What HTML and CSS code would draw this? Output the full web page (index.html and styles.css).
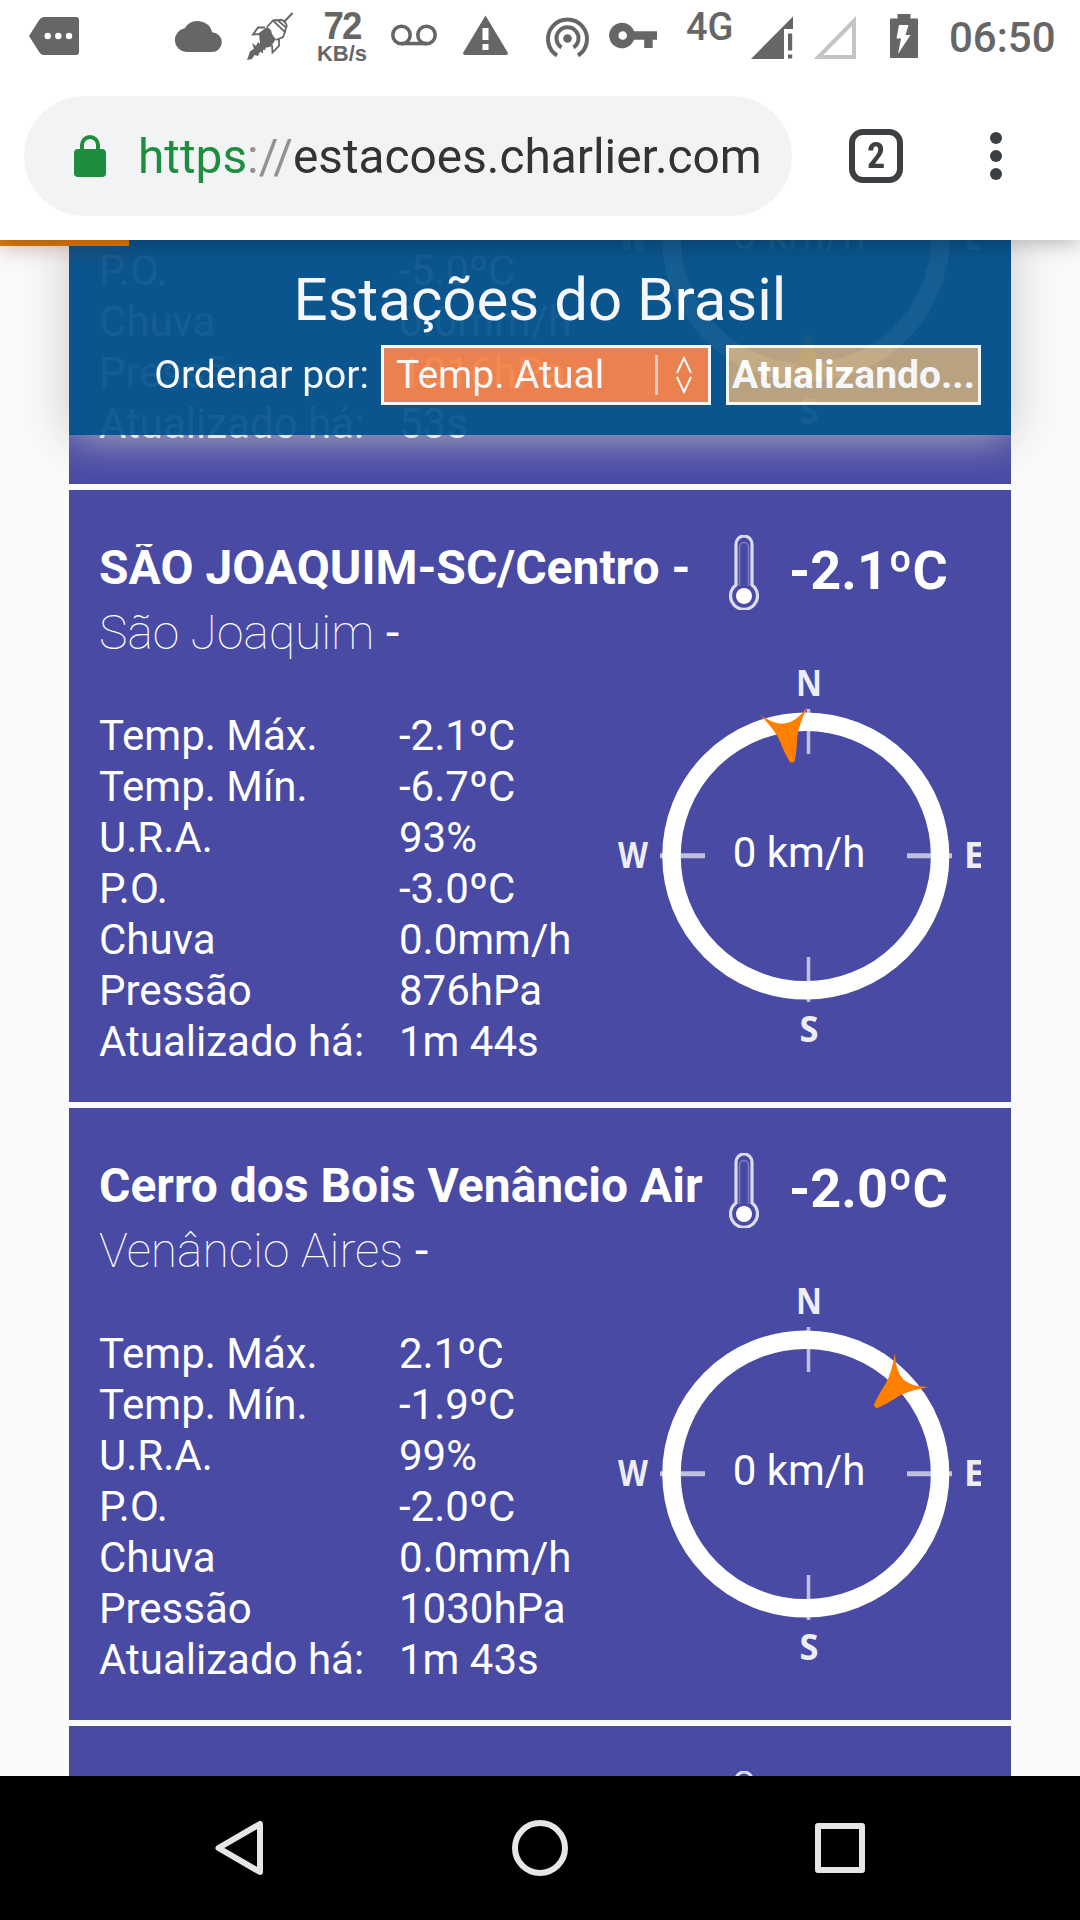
FILE: index.html
```html
<!DOCTYPE html>
<html lang="pt-BR">
<head>
    <meta charset="UTF-8">
    <meta name="viewport" content="width=device-width, initial-scale=1.0">
    <title>Estações do Brasil</title>
    <link rel="stylesheet" href="styles.css">
</head>
<body>

<!-- Desenhos reutilizados nos cartões -->
<svg class="defs" width="0" height="0">
    <symbol id="thermometer" viewBox="0 0 30 75">
        <path d="M7 50V9a8 8 0 0 1 16 0V50A13.500 13.500 0 1 1 7 50Z" fill="none" stroke="#fff" stroke-width="3.200" opacity=".8"/>
        <path d="M10.500 51V12a4.500 4.500 0 0 1 9 0V51" fill="none" stroke="#fff" stroke-width="1.500" opacity=".3"/>
        <circle cx="15" cy="61" r="8" fill="#fff"/>
    </symbol>
    <symbol id="compass" viewBox="0 0 363 372">
        <circle cx="187.800" cy="186" r="134.300" fill="none" stroke="#fff" stroke-width="18.500"/>
        <g stroke="#fff" opacity=".65">
            <path d="M190.500 39V84M190.500 287V332" stroke-width="3.500"/>
            <path d="M42 185.700H87M289 185.700H334" stroke-width="5"/>
        </g>
        <g class="points">
            <text x="191" y="26" textLength="26" lengthAdjust="spacingAndGlyphs">N</text>
            <text x="191" y="371.500" textLength="19" lengthAdjust="spacingAndGlyphs">S</text>
            <text x="15" y="197.500" textLength="30" lengthAdjust="spacingAndGlyphs">W</text>
            <text x="356" y="197.500" textLength="20" lengthAdjust="spacingAndGlyphs">E</text>
        </g>
    </symbol>
    <symbol id="arrow" viewBox="0 0 363 372">
        <path d="M166 39Q180 52 190 51.500Q200 52 214 39Q202 56 199 67Q196 82 192 91H188Q184 82 181 67Q178 56 166 39Z" fill="#ff8000"/>
    </symbol>
</svg>

<!-- Barra de status -->
<div class="status-bar">
    <div class="notifications">
        <svg width="72" height="72" viewBox="18 0 72 72"><path d="M29 36L39.500 19.500Q41 17 44 17H76Q79 17 79 20V52Q79 55 76 55H44Q41 55 39.500 52.500Z"/><g fill="#fff"><circle cx="47.700" cy="36" r="3.200"/><circle cx="58.300" cy="36" r="3.200"/><circle cx="69" cy="36" r="3.200"/></g></svg>
        <span></span>
        <svg width="72" height="72" viewBox="162 0 72 72"><path d="M186.500 52A12 12 0 0 1 184.700 28.200A15.300 15.300 0 0 1 212.300 32.200A9.900 9.900 0 0 1 211.500 52Z"/></svg>
        <svg width="72" height="72" viewBox="234 0 72 72">
            <path d="M292.500 13L284 22" stroke="#666" stroke-width="2"/>
            <path d="M267 27L273 20.500L285 32L283 37L276 40M273 20.500L277.500 20L286 27.500L285 32M278 20.500Q282 18.500 284.500 22Q288 25 286 28M265 27.500L258 27.500L253 34.500L261 34M279 39.500V46L272.500 52.500L272 45" fill="none" stroke="#666" stroke-width="1.800"/>
            <path d="M259 33L267 27L271 30Q272 36 276 39L271 46.500L265 48L266.500 49.500L263 50L263 53.500L260 51.500L258 56L254.500 55L252 59L247 60L250 51.500L254 48.500L252 43L256 46L258 42L260 44Z"/>
        </svg>
        <div class="net-speed"><b>72</b><span>KB/s</span></div>
        <svg width="72" height="72" viewBox="378 0 72 72"><g fill="none" stroke="#666" stroke-width="3.600"><circle cx="401.500" cy="35" r="8.700"/><circle cx="426.500" cy="35" r="8.700"/><path d="M401 43.500H427"/></g></svg>
        <svg width="72" height="72" viewBox="450 0 72 72"><path d="M485.500 15.500L508 53Q508 55 506 55H465Q463 55 463 53Z"/><path d="M482.500 28H488.500V40H482.500ZM482.500 44H488.500V50H482.500Z" fill="#fff"/></svg>
    </div>
    <svg width="73" height="72" viewBox="531 0 73 72"><g fill="none" stroke="#666" stroke-width="4"><path d="M557 55.500A19.500 19.500 0 1 1 578 55.500"/><path d="M561.500 47.500A11 11 0 1 1 573.500 47.500"/></g><circle cx="567.500" cy="38.500" r="4.300"/></svg>
    <svg width="60" height="72" viewBox="604 0 60 72"><path fill-rule="evenodd" d="M634 31.300H657V39.700H652.700V48H644.200V39.700H634A12.800 12.800 0 1 1 634 31.300ZM622.700 31.200A4.300 4.300 0 1 0 622.700 39.800A4.300 4.300 0 1 0 622.700 31.200Z"/></svg>
    <span class="network">4G</span>
    <svg width="60" height="72" viewBox="744 0 60 72"><path d="M751 59L793 16.500V29H784V59ZM788 33.500H792.200V50.500H788ZM788 54.500H792.200V58.500H788Z"/></svg>
    <svg width="66" height="72" viewBox="804 0 66 72"><path d="M818.500 57L854 21V57Z" fill="none" stroke="#c4c4c4" stroke-width="4"/></svg>
    <svg width="70" height="72" viewBox="870 0 70 72"><path d="M890 18.500H897.500V14H910.500V18.500H918V58H890Z"/><path d="M899 25H908.500L905.500 35H910.500L898 54L901 38.500H896.500Z" fill="#fff"/></svg>
    <span class="clock">06:50</span>
</div>

<!-- Barra de endereço -->
<div class="toolbar">
    <div class="address">
        <svg width="32" height="42" viewBox="0 0 32 42"><path d="M8 16V10a8 8 0 0 1 16 0V16" fill="none" stroke="#1e8e3e" stroke-width="4"/><rect y="14" width="32" height="28" rx="4" fill="#1e8e3e"/></svg>
        <div class="url"><span class="scheme">https</span><span class="slashes">://</span>estacoes.charlier.com</div>
    </div>
    <div class="tabs">2</div>
    <svg class="menu" width="12" height="48" viewBox="0 0 12 48"><circle cx="6" cy="6" r="6"/><circle cx="6" cy="24" r="6"/><circle cx="6" cy="42" r="6"/></svg>
</div>

<div class="page">
    <header class="header">
        <h1>Estações do Brasil</h1>
        <div class="order">
            <label>Ordenar por:</label>
            <div class="select">
                <span>Temp. Atual</span>
                <i></i>
                <svg width="16" height="38" viewBox="0 0 16 38"><path d="M1 17L8 2L15 17M1 21L8 36L15 21" fill="none" stroke="#fff" stroke-width="2"/></svg>
            </div>
            <button>Atualizando...</button>
        </div>
    </header>
    <div class="progress"></div>

    <main class="stations">
        <section class="station">
            <div class="top">
                <div class="name"><h2></h2><p></p></div>
            </div>
            <div class="data">
                <dl>
                    <dt></dt><dd></dd>
                    <dt></dt><dd></dd>
                    <dt></dt><dd></dd>
                    <dt>P.O.</dt><dd>-5.0ºC</dd>
                    <dt>Chuva</dt><dd>0.0mm/h</dd>
                    <dt>Pressão</dt><dd>1016hPa</dd>
                    <dt>Atualizado há:</dt><dd>53s</dd>
                </dl>
                <svg class="wind" width="363" height="372" viewBox="0 0 363 372">
                    <use href="#compass"/>
                    <use href="#arrow" transform="rotate(180 190 186)"/>
                    <text x="181" y="197">0 km/h</text>
                </svg>
            </div>
        </section>

        <section class="station">
            <div class="top">
                <div class="name">
                    <h2>SÃO JOAQUIM-SC/Centro -</h2>
                    <p><span>São Joaquim</span> -</p>
                </div>
                <svg class="thermo" width="30" height="75"><use href="#thermometer"/></svg>
                <strong>-2.1ºC</strong>
            </div>
            <div class="data">
                <dl>
                    <dt>Temp. Máx.</dt><dd>-2.1ºC</dd>
                    <dt>Temp. Mín.</dt><dd>-6.7ºC</dd>
                    <dt>U.R.A.</dt><dd>93%</dd>
                    <dt>P.O.</dt><dd>-3.0ºC</dd>
                    <dt>Chuva</dt><dd>0.0mm/h</dd>
                    <dt>Pressão</dt><dd>876hPa</dd>
                    <dt>Atualizado há:</dt><dd>1m 44s</dd>
                </dl>
                <svg class="wind" width="363" height="372" viewBox="0 0 363 372">
                    <use href="#compass"/>
                    <use href="#arrow" transform="rotate(-9.500 190 186)"/>
                    <text x="181" y="197">0 km/h</text>
                </svg>
            </div>
        </section>

        <section class="station">
            <div class="top">
                <div class="name">
                    <h2>Cerro dos Bois Venâncio Air</h2>
                    <p><span>Venâncio Aires</span> -</p>
                </div>
                <svg class="thermo" width="30" height="75"><use href="#thermometer"/></svg>
                <strong>-2.0ºC</strong>
            </div>
            <div class="data">
                <dl>
                    <dt>Temp. Máx.</dt><dd>2.1ºC</dd>
                    <dt>Temp. Mín.</dt><dd>-1.9ºC</dd>
                    <dt>U.R.A.</dt><dd>99%</dd>
                    <dt>P.O.</dt><dd>-2.0ºC</dd>
                    <dt>Chuva</dt><dd>0.0mm/h</dd>
                    <dt>Pressão</dt><dd>1030hPa</dd>
                    <dt>Atualizado há:</dt><dd>1m 43s</dd>
                </dl>
                <svg class="wind" width="363" height="372" viewBox="0 0 363 372">
                    <use href="#compass"/>
                    <use href="#arrow" transform="rotate(45 190 186)"/>
                    <text x="181" y="197">0 km/h</text>
                </svg>
            </div>
        </section>

        <section class="station">
            <div class="top">
                <div class="name"></div>
                <svg class="thermo" width="30" height="75"><use href="#thermometer"/></svg>
            </div>
        </section>
    </main>
</div>

<!-- Botões do sistema -->
<nav class="nav-bar">
    <svg width="60" height="60" viewBox="0 0 60 60"><path d="M50 6V54L8.500 30Z"/></svg>
    <svg width="60" height="60" viewBox="0 0 60 60"><circle cx="30" cy="30" r="25"/></svg>
    <svg width="60" height="60" viewBox="0 0 60 60"><rect x="8" y="8" width="44" height="44"/></svg>
</nav>

</body>
</html>
```
FILE: styles.css
```css
* {
    box-sizing: border-box;
}
body {
    margin: 0;
    width: 1080px;
    height: 1920px;
    overflow: hidden;
    display: flex;
    flex-direction: column;
    font-family: Roboto, sans-serif;
    background-color: #fafafa;
}
h1, h2, p, dl, dd {
    margin: 0;
}
svg {
    display: block;
    flex-shrink: 0;
}
.defs {
    position: absolute;
}

/* Barra de status */
.status-bar {
    display: flex;
    height: 72px;
    background-color: #fff;
    color: #666;
    fill: #666;
}
.notifications {
    display: grid;
    grid-template-columns: repeat(7, 72px);
    width: 531px;
    padding-left: 18px;
}
.net-speed {
    font-family: "Liberation Sans", sans-serif;
    font-weight: bold;
    text-align: center;
    padding-top: 7px;
}
.net-speed b {
    display: block;
    font-size: 39px;
    line-height: 38px;
    letter-spacing: -2px;
    transform: scaleX(0.94);
}
.net-speed span {
    display: block;
    font-size: 22px;
    line-height: 18px;
}
.network {
    width: 80px;
    padding: 3px 0 0 22px;
    font-size: 38px;
    line-height: 48px;
    font-weight: 500;
}
.clock {
    padding: 13px 0 0 9px;
    font-size: 42px;
    line-height: 50px;
    font-weight: 500;
}

/* Barra de endereço */
.toolbar {
    display: flex;
    align-items: center;
    height: 168px;
    padding: 0 78px 0 24px;
    background-color: #fff;
    box-shadow: 0 0 24px rgba(0, 0, 0, 0.35);
    clip-path: inset(0 0 -40px 0);
    position: relative;
    z-index: 3;
}
.address {
    display: flex;
    align-items: center;
    width: 768px;
    height: 120px;
    padding-left: 50px;
    border-radius: 60px;
    background-color: #f1f3f4;
}
.url {
    margin: 2px 0 0 32px;
    font-size: 47.8px;
    color: #333;
    white-space: nowrap;
}
.scheme {
    color: #1e8e3e;
}
.slashes {
    color: #929292;
}
.tabs {
    width: 54px;
    height: 54px;
    margin-left: 57px;
    border: 6px solid #3c4043;
    border-radius: 14px;
    color: #3c4043;
    font-size: 36px;
    line-height: 43px;
    font-weight: bold;
    font-stretch: condensed;
    text-align: center;
}
.menu {
    margin-left: 87px;
    fill: #3c4043;
}

/* Página */
.page {
    flex: 1;
    min-height: 0;
    overflow: hidden;
    position: relative;
}
.header {
    position: absolute;
    z-index: 1;
    top: 0;
    left: 69px;
    width: 942px;
    height: 195px;
    padding-top: 25px;
    background-color: #08568e;
    box-shadow: 0 0 45px #c4c4c4;
    color: #fff;
    opacity: 0.95;
}
.header h1 {
    font-size: 60px;
    line-height: 70px;
    font-weight: normal;
    text-align: center;
}
.order {
    display: flex;
    justify-content: flex-end;
    margin-top: 10px;
    padding-right: 30px;
    font-size: 39px;
    line-height: 56px;
}
.order label {
    margin-right: 12px;
    padding-top: 2px;
}
.select {
    display: flex;
    align-items: center;
    width: 330px;
    height: 60px;
    padding-left: 12px;
    margin-right: 15px;
    border: 3px solid #fff;
    background-color: #f5844a;
}
.select span {
    flex: 1;
}
.select i {
    width: 3px;
    height: 40px;
    margin-right: 18px;
    background-color: #d8d4d4;
}
.select svg {
    margin-right: 16px;
}
.order button {
    width: 255px;
    height: 60px;
    padding: 0;
    border: 3px solid #fff;
    background-color: #bfa77f;
    color: #fff;
    font: bold 39px/52px Roboto, sans-serif;
    white-space: nowrap;
}
.progress {
    position: absolute;
    z-index: 2;
    top: 0;
    left: 0;
    width: 129px;
    height: 6px;
    background-color: #e07b10;
    box-shadow: 0 0 24px rgba(220, 60, 40, 0.35);
}

/* Estações */
.stations {
    display: flex;
    flex-direction: column;
    gap: 6px;
    width: 942px;
    margin: -368px auto 0;
}
.station {
    flex-shrink: 0;
    height: 612px;
    padding: 45px 30px 0;
    background-color: #484aa4;
    color: #fff;
}
.top {
    display: flex;
    height: 135px;
}
.name {
    width: 606px;
    padding-top: 9px;
    margin-right: 24px;
    white-space: nowrap;
}
.name h2 {
    font-size: 48px;
    line-height: 48px;
    overflow: hidden;
}
.name p {
    margin-top: 17px;
    font-size: 48px;
    line-height: 48px;
}
.name p span {
    font-weight: 100;
}
.top strong {
    margin-left: 30px;
    padding-top: 4px;
    font-size: 54px;
    line-height: 64px;
}
.data {
    display: flex;
}
.data dl {
    display: grid;
    grid-template-columns: 300px 1fr;
    grid-auto-rows: 51px;
    width: 519px;
    padding-top: 40px;
    font-size: 42px;
    line-height: 51px;
}
.wind {
    overflow: visible;
    font-size: 42px;
    text-anchor: middle;
    fill: #fff;
}
.points {
    font: bold 36px "Open Sans", sans-serif;
    opacity: 0.9;
}

/* Botões do sistema */
.nav-bar {
    display: flex;
    justify-content: space-between;
    align-items: center;
    height: 144px;
    padding: 0 210px;
    background-color: #000;
}
.nav-bar svg {
    fill: none;
    stroke: #e6e6e6;
    stroke-width: 6;
    stroke-linejoin: round;
}
```
